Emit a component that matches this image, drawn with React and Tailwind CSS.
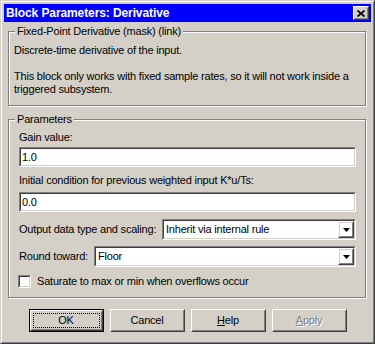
import React from "react";

const Sunken = ({ className = "", children }) => (
  <div className={`border border-t-[#808080] border-l-[#808080] border-r-white border-b-white ${className}`}>
    <div className="h-full border border-t-[#404040] border-l-[#404040] border-r-[#d4d0c8] border-b-[#d4d0c8] bg-white flex items-center">
      {children}
    </div>
  </div>
);

const Raised = ({ className = "", children }) => (
  <div className={`border border-t-white border-l-white border-r-[#404040] border-b-[#404040] ${className}`}>
    <div className="h-full border border-t-[#d4d0c8] border-l-[#d4d0c8] border-r-[#808080] border-b-[#808080] flex items-center justify-center">
      {children}
    </div>
  </div>
);

const Combo = ({ value, className = "" }) => (
  <Sunken className={`h-[21px] ${className}`}>
    <span className="flex-1 pl-[2px] leading-[13px]">{value}</span>
    <Raised className="w-[16px] h-full">
      <svg width="7" height="4" viewBox="0 0 7 4">
        <path d="M0 0h7L3.5 4z" fill="#000" />
      </svg>
    </Raised>
  </Sunken>
);

const DlgButton = ({ children, disabled }) => (
  <Raised className="w-[75px] h-[23px]">
    <span
      className={
        disabled
          ? "text-[#808080] [text-shadow:1px_1px_0_#fff]"
          : "text-black"
      }
    >
      {children}
    </span>
  </Raised>
);

export default function App() {
  return (
    <div className="w-[375px] h-[344px] bg-[#d4d0c8] border border-t-[#d4d0c8] border-l-[#d4d0c8] border-r-[#404040] border-b-[#404040] font-['Liberation_Sans',Arial,sans-serif] text-[11px] leading-[13px] tracking-[-0.2px] text-black">
      <div className="h-full border border-t-white border-l-white border-r-[#808080] border-b-[#808080] p-[2px] flex flex-col">
        {/* title bar */}
        <div className="h-[18px] shrink-0 bg-[#0000ff] flex items-center justify-between pl-[2px] pr-[2px]">
          <span className="text-white font-bold text-[12px] tracking-[-0.1px]">
            Block Parameters: Derivative
          </span>
          <Raised className="w-[16px] h-[14px] bg-[#d4d0c8]">
            <svg width="8" height="7" viewBox="0 0 8 7">
              <path d="M0.5 0.5L7.5 6.5M7.5 0.5L0.5 6.5" stroke="#000" strokeWidth="1.7" />
            </svg>
          </Raised>
        </div>

        <div className="flex-1 flex flex-col px-[4px]">
          {/* description group */}
          <fieldset className="mt-[3px] mr-[1px] border border-[#808080] shadow-[inset_1px_1px_0_#fff,1px_1px_0_#fff] px-[5px] pt-[6px] pb-[9px]">
            <legend className="ml-[1px] px-[2px] bg-[#d4d0c8]">
              Fixed-Point Derivative (mask) (link)
            </legend>
            <p>Discrete-time derivative of the input.</p>
            <p className="mt-[13px]">
              This block only works with fixed sample rates, so it will not work inside a
              <br />
              triggered subsystem.
            </p>
          </fieldset>

          {/* parameters group */}
          <fieldset className="mt-[7px] mr-[1px] border border-[#808080] shadow-[inset_1px_1px_0_#fff,1px_1px_0_#fff] px-[5px] pt-[5px] pb-[9px]">
            <legend className="ml-[1px] px-[2px] bg-[#d4d0c8]">Parameters</legend>
            <div className="pl-[5px] pr-[4px] flex flex-col">
              <span>Gain value:</span>
              <Sunken className="h-[20px] mt-[3px]">
                <span className="pl-[1px]">1.0</span>
              </Sunken>

              <span className="mt-[7px]">Initial condition for previous weighted input K*u/Ts:</span>
              <Sunken className="h-[20px] mt-[5px]">
                <span className="pl-[1px]">0.0</span>
              </Sunken>

              <div className="mt-[7px] flex items-center justify-between">
                <span>Output data type and scaling:</span>
                <Combo value="Inherit via internal rule" className="w-[194px]" />
              </div>

              <div className="mt-[6px] flex items-center justify-between">
                <span>Round toward:</span>
                <Combo value="Floor" className="w-[262px]" />
              </div>

              <div className="mt-[8px] flex items-center gap-[6px] -ml-[1px]">
                <Sunken className="w-[13px] h-[13px]" />
                <span>Saturate to max or min when overflows occur</span>
              </div>
            </div>
          </fieldset>

          {/* buttons */}
          <div className="mt-[11px] flex justify-center gap-[6px]">
            <div className="w-[75px] h-[23px] border border-black">
              <div className="h-full border border-t-white border-l-white border-r-[#404040] border-b-[#404040]">
                <div className="h-full border border-t-[#d4d0c8] border-l-[#d4d0c8] border-r-[#808080] border-b-[#808080] p-[1px]">
                  <div className="h-full border border-dotted border-black flex items-center justify-center">
                    OK
                  </div>
                </div>
              </div>
            </div>
            <DlgButton>Cancel</DlgButton>
            <DlgButton>
              <span className="underline">H</span>elp
            </DlgButton>
            <DlgButton disabled>
              <span className="underline">A</span>pply
            </DlgButton>
          </div>
        </div>
      </div>
    </div>
  );
}
